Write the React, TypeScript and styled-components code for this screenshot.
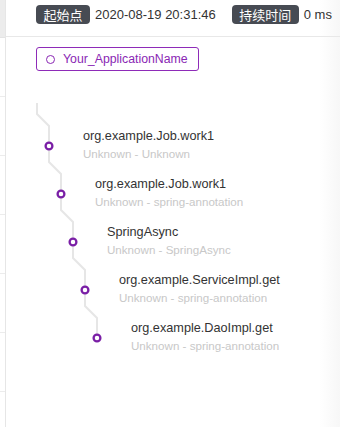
import * as React from 'react';
import styled, { createGlobalStyle } from 'styled-components';

const GlobalStyle = createGlobalStyle`
  html, body {
    margin: 0;
    padding: 0;
    background: #fff;
  }
  body {
    font-family: "Liberation Sans", "Noto Sans CJK SC", sans-serif;
    color: #333;
  }
`;

const Page = styled.div`
  display: flex;
  min-height: 100vh;
  background: linear-gradient(to right, #fff calc(100% - 20px), #f7f7f7);
`;

const Backdrop = styled.div`
  width: 5px;
  flex-shrink: 0;
  border-right: 1px solid #e6e6e6;
  display: flex;
  flex-direction: column;
`;

const BackdropHead = styled.div`
  height: 37px;
  background: #ececec;
  border-bottom: 1px solid #e4e4e4;
`;

const BackdropRow = styled.div`
  height: 58px;
  border-bottom: 1px solid #ececec;
`;

const Drawer = styled.div`
  flex: 1;
  display: flex;
  flex-direction: column;
`;

const Header = styled.div`
  height: 37px;
  box-sizing: border-box;
  padding: 5px 0 0 30px;
  border-bottom: 1px solid #e8e8e8;
  display: flex;
  align-items: flex-start;
  font-size: 13px;
`;

const Tag = styled.span`
  height: 19px;
  line-height: 19px;
  padding: 0 7.5px;
  border-radius: 4px;
  background: #474b53;
  color: #fff;
  font-size: 13px;
  font-family: "Noto Sans CJK SC", sans-serif;
`;

const Value = styled.span<{ $gap?: number }>`
  line-height: 19px;
  margin-left: 5px;
  margin-right: ${(p) => p.$gap ?? 0}px;
  color: #333;
`;

const Body = styled.div`
  padding: 10px 0 0 30px;
`;

const AppTag = styled.div`
  display: inline-flex;
  align-items: center;
  gap: 8px;
  height: 24px;
  box-sizing: border-box;
  padding: 0 10px 0 9px;
  border: 1px solid #8e2bb8;
  border-radius: 3px;
  color: #8a27b4;
  font-size: 12.3px;
`;

const Ring = styled.span`
  width: 9px;
  height: 9px;
  box-sizing: border-box;
  border: 1.6px solid #8a27b4;
  border-radius: 50%;
`;

const Tree = styled.div`
  display: grid;
  margin-top: 27px;
`;

const Lines = styled.svg`
  grid-area: 1 / 1;
`;

const Rows = styled.div`
  grid-area: 1 / 1;
  padding-top: 24px;
  display: flex;
  flex-direction: column;
`;

const Row = styled.div<{ $depth: number }>`
  height: 48px;
  box-sizing: border-box;
  padding: 5px 0 0 ${(p) => 47 + p.$depth * 12}px;
`;

const Title = styled.div`
  font-size: 12.7px;
  line-height: 18px;
  color: #333;
`;

const Sub = styled.div`
  font-size: 11.6px;
  line-height: 16px;
  margin-top: 1px;
  color: #c8c8c8;
`;

const spans = [
  { title: 'org.example.Job.work1', sub: 'Unknown - Unknown' },
  { title: 'org.example.Job.work1', sub: 'Unknown - spring-annotation' },
  { title: 'SpringAsync', sub: 'Unknown - SpringAsync' },
  { title: 'org.example.ServiceImpl.get', sub: 'Unknown - spring-annotation' },
  { title: 'org.example.DaoImpl.get', sub: 'Unknown - spring-annotation' },
];

const TreeLines = ({ count }: { count: number }) => {
  let d = 'M1 5';
  const nodes: { x: number; y: number }[] = [];
  for (let i = 0; i < count; i++) {
    const px = 1 + i * 12;
    const py = i * 48;
    d += ` L${px} ${py + 16} L${px + 12} ${py + 28} L${px + 12} ${py + 48}`;
    nodes.push({ x: px + 12, y: py + 48 });
  }
  return (
    <Lines width={90} height={count * 48 + 12}>
      <path d={d} fill="none" stroke="#e6e6e6" strokeWidth={2} />
      {nodes.map((n, i) => (
        <circle key={i} cx={n.x} cy={n.y} r={3.4} fill="#fff" stroke="#7a1fa6" strokeWidth={2.3} />
      ))}
    </Lines>
  );
};

export default function App() {
  return (
    <Page>
      <GlobalStyle />
      <Backdrop>
        <BackdropHead />
        {[0, 1, 2, 3, 4, 5].map((i) => (
          <BackdropRow key={i} />
        ))}
      </Backdrop>
      <Drawer>
        <Header>
          <Tag>起始点</Tag>
          <Value $gap={16}>2020-08-19 20:31:46</Value>
          <Tag>持续时间</Tag>
          <Value>0 ms</Value>
        </Header>
        <Body>
          <AppTag>
            <Ring />
            Your_ApplicationName
          </AppTag>
          <Tree>
            <TreeLines count={spans.length} />
            <Rows>
              {spans.map((s, i) => (
                <Row key={i} $depth={i}>
                  <Title>{s.title}</Title>
                  <Sub>{s.sub}</Sub>
                </Row>
              ))}
            </Rows>
          </Tree>
        </Body>
      </Drawer>
    </Page>
  );
}
